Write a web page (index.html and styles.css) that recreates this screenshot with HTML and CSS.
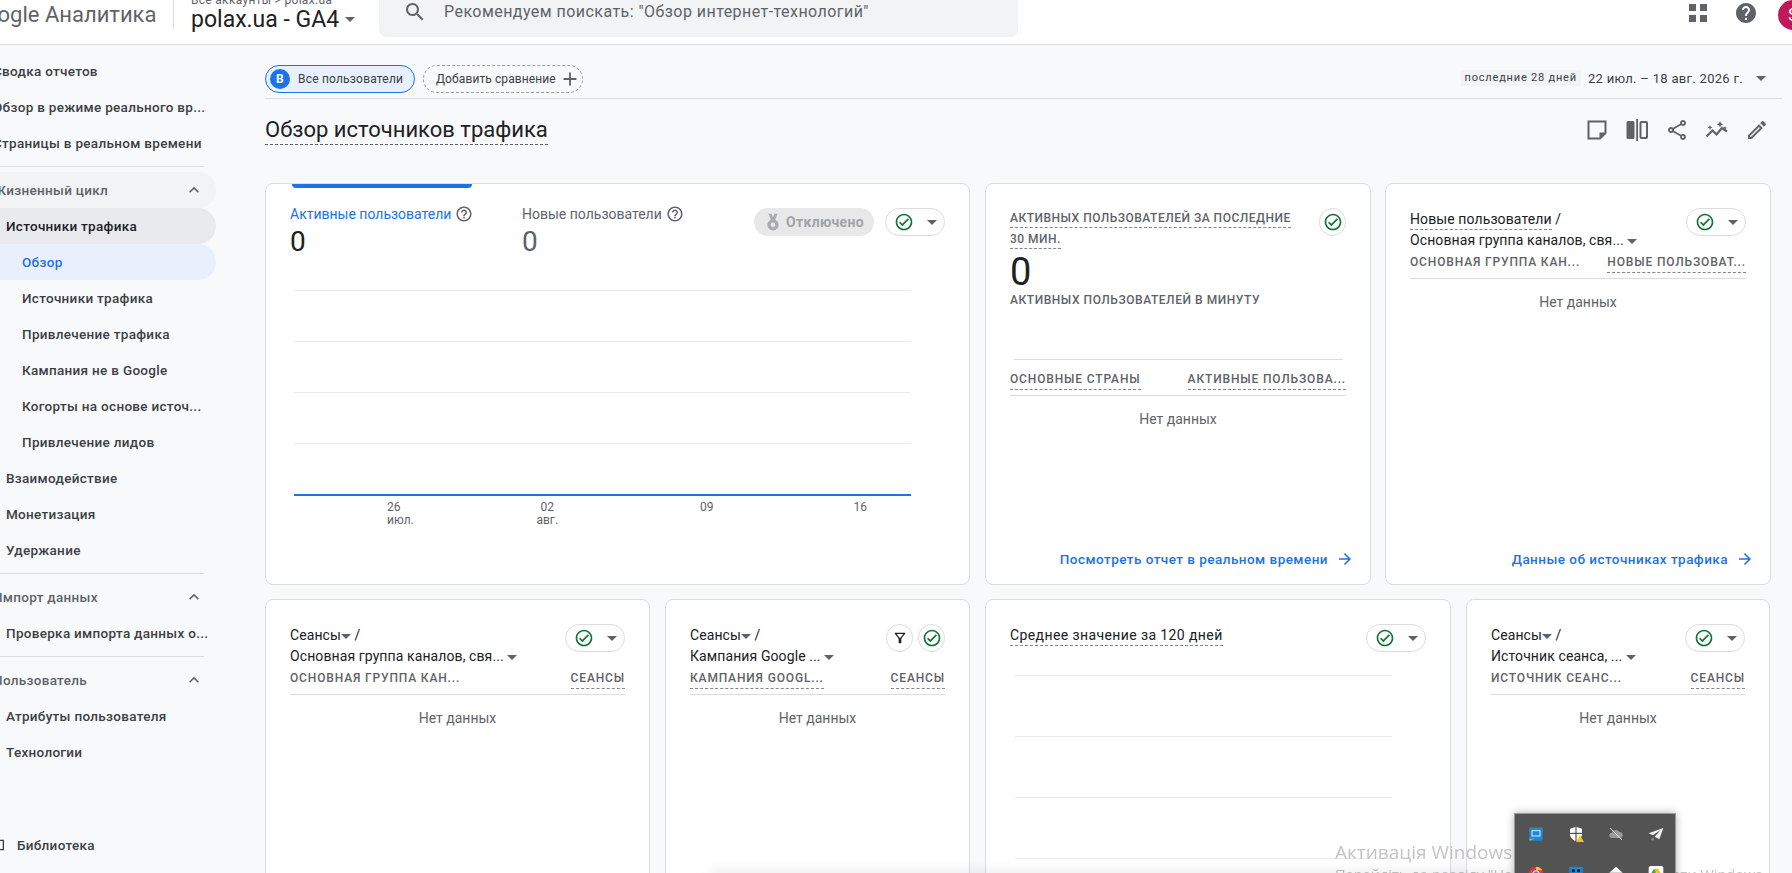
FILE: index.html
```html
<!DOCTYPE html>
<html lang="ru">
<head>
    <meta charset="UTF-8">
    <title>Обзор источников трафика</title>
    <link rel="stylesheet" href="styles.css">
</head>
<body>
    <!-- icon sprite -->
    <svg class="sprite" xmlns="http://www.w3.org/2000/svg">
        <symbol id="i-check" viewBox="0 0 24 24"><path d="M12 2C6.48 2 2 6.48 2 12s4.48 10 10 10 10-4.48 10-10S17.52 2 12 2zm0 18c-4.41 0-8-3.59-8-8s3.59-8 8-8 8 3.59 8 8-3.59 8-8 8zm4.59-12.42L10 14.17l-2.59-2.58L6 13l4 4 8-8z"/></symbol>
        <symbol id="i-help" viewBox="0 0 24 24"><path d="M11 18h2v-2h-2v2zm1-16C6.48 2 2 6.48 2 12s4.48 10 10 10 10-4.48 10-10S17.52 2 12 2zm0 18c-4.41 0-8-3.59-8-8s3.59-8 8-8 8 3.59 8 8-3.59 8-8 8zm0-14c-2.21 0-4 1.79-4 4h2c0-1.1.9-2 2-2s2 .9 2 2c0 2-3 1.75-3 5h2c0-2.25 3-2.5 3-5 0-2.21-1.79-4-4-4z"/></symbol>
        <symbol id="i-up" viewBox="0 0 24 24"><path d="M7.41 15.41L12 10.83l4.59 4.58L18 14l-6-6-6 6z"/></symbol>
        <symbol id="i-arrow" viewBox="0 0 24 24"><path d="M12 4l-1.41 1.41L16.17 11H4v2h12.17l-5.58 5.59L12 20l8-8z"/></symbol>
    </svg>

    <header class="topbar">
        <div class="logo">Google Аналитика</div>
        <div class="account">
            <div class="crumbs">Все аккаунты &gt; polax.ua</div>
            <div class="property">polax.ua - GA4 <span class="caret caret-big"></span></div>
        </div>
        <div class="search">
            <svg class="search-icon" viewBox="0 0 24 24"><path d="M15.5 14h-.79l-.28-.27C15.41 12.59 16 11.11 16 9.5 16 5.91 13.09 3 9.5 3S3 5.91 3 9.5 5.91 16 9.5 16c1.61 0 3.09-.59 4.23-1.57l.27.28v.79l5 4.99L20.49 19l-4.99-5zm-6 0C7.01 14 5 11.99 5 9.5S7.01 5 9.5 5 14 7.01 14 9.5 11.99 14 9.5 14z"/></svg>
            <span>Рекомендуем поискать: "Обзор интернет-технологий"</span>
        </div>
        <div class="top-actions">
            <div class="apps"><i></i><i></i><i></i><i></i></div>
            <svg class="top-help" viewBox="0 0 24 24"><path d="M12 2C6.48 2 2 6.48 2 12s4.48 10 10 10 10-4.48 10-10S17.52 2 12 2zm1 17h-2v-2h2v2zm2.07-7.75l-.9.92C13.45 12.9 13 13.5 13 15h-2v-.5c0-1.1.45-2.1 1.17-2.83l1.24-1.26c.37-.36.59-.86.59-1.41 0-1.1-.9-2-2-2s-2 .9-2 2H8c0-2.21 1.79-4 4-4s4 1.79 4 4c0 .88-.36 1.68-.93 2.25z"/></svg>
            <div class="avatar">S</div>
        </div>
    </header>

    <div class="layout">
        <nav class="sidebar">
            <div class="nav-row lvl0 strong">Сводка отчетов</div>
            <div class="nav-row lvl0 strong">Обзор в режиме реального вр...</div>
            <div class="nav-row lvl0 strong">Страницы в реальном времени</div>
            <div class="nav-divider"></div>
            <div class="nav-row lvl0 section open">Жизненный цикл <svg class="chev"><use href="#i-up"/></svg></div>
            <div class="nav-row lvl1 active-parent">Источники трафика</div>
            <div class="nav-row lvl2 active">Обзор</div>
            <div class="nav-row lvl2">Источники трафика</div>
            <div class="nav-row lvl2">Привлечение трафика</div>
            <div class="nav-row lvl2">Кампания не в Google</div>
            <div class="nav-row lvl2">Когорты на основе источ...</div>
            <div class="nav-row lvl2">Привлечение лидов</div>
            <div class="nav-row lvl1">Взаимодействие</div>
            <div class="nav-row lvl1">Монетизация</div>
            <div class="nav-row lvl1">Удержание</div>
            <div class="nav-divider"></div>
            <div class="nav-row lvl0 section">Импорт данных <svg class="chev"><use href="#i-up"/></svg></div>
            <div class="nav-row lvl1">Проверка импорта данных о...</div>
            <div class="nav-divider"></div>
            <div class="nav-row lvl0 section">Пользователь <svg class="chev"><use href="#i-up"/></svg></div>
            <div class="nav-row lvl1">Атрибуты пользователя</div>
            <div class="nav-row lvl1">Технологии</div>
            <div class="nav-row library">
                <svg class="library-icon" viewBox="0 0 24 24"><path d="M4 5h16v14H4z" fill="none" stroke="#3c4043" stroke-width="2"/></svg>
                Библиотека
            </div>
        </nav>

        <main class="content">
            <div class="filter-bar">
                <div class="chip-user"><span class="chip-badge">В</span>Все пользователи</div>
                <div class="chip-add">Добавить сравнение
                    <svg class="chip-plus" viewBox="0 0 24 24"><path d="M19 13h-6v6h-2v-6H5v-2h6V5h2v6h6v2z"/></svg>
                </div>
                <div class="date">
                    <span class="date-pill">последние 28 дней</span>
                    <span class="date-text">22 июл. – 18 авг. 2026 г.</span>
                    <span class="caret"></span>
                </div>
            </div>

            <div class="title-row">
                <h1 class="page-title">Обзор источников трафика</h1>
                <div class="title-tools">
                    <svg viewBox="0 0 24 24"><path d="M3.5 3.5h17v11.5l-5.500 5.500h-11.500z" fill="none" stroke="#5f6368" stroke-width="2"/><path d="M21 14.500h-6.500v6.500z" fill="#5f6368"/></svg>
                    <svg viewBox="0 0 24 24"><rect x="1.500" y="3" width="8" height="18" rx="1.500" fill="#5f6368"/><rect x="11.200" y="1" width="1.800" height="22" fill="#5f6368"/><rect x="15.500" y="4" width="6.500" height="16" rx="1" fill="none" stroke="#5f6368" stroke-width="2"/></svg>
                    <svg viewBox="0 0 24 24"><path d="M18 16.080c-.76 0-1.440.3-1.960.77L8.910 12.700c.05-.23.09-.46.09-.7s-.04-.47-.09-.7l7.050-4.110c.54.5 1.250.81 2.040.81 1.660 0 3-1.340 3-3s-1.340-3-3-3-3 1.340-3 3c0 .24.04.47.09.7L8.040 9.810C7.500 9.310 6.790 9 6 9c-1.660 0-3 1.340-3 3s1.340 3 3 3c.79 0 1.500-.31 2.040-.81l7.120 4.160c-.05.21-.08.43-.08.65 0 1.610 1.310 2.920 2.920 2.920 1.610 0 2.920-1.310 2.920-2.920 0-1.610-1.310-2.920-2.920-2.920zM18 4c.55 0 1 .45 1 1s-.45 1-1 1-1-.45-1-1 .45-1 1-1zM6 13c-.55 0-1-.45-1-1s.45-1 1-1 1 .45 1 1-.45 1-1 1zm12 7.020c-.55 0-1-.45-1-1s.45-1 1-1 1 .45 1 1-.45 1-1 1z" fill="#5f6368"/></svg>
                    <svg viewBox="0 0 24 24"><path d="M1.500 18.500l6-6 4 4 5.500-6.500 5 3.500" fill="none" stroke="#5f6368" stroke-width="2.200"/><path d="M5 7l.8 1.700L7.500 9.500l-1.700.8L5 12l-.8-1.700-1.700-.8 1.700-.8zM15 3l1 2.200 2.200 1-2.200 1-1 2.200-1-2.200-2.200-1 2.200-1zM20 8l.6 1.300 1.400.7-1.400.6-.6 1.400-.6-1.400-1.400-.6 1.400-.7z" fill="#5f6368"/></svg>
                    <svg viewBox="0 0 24 24"><path d="M14.060 9.020l.92.92L5.920 19H5v-.92l9.060-9.060M17.660 3c-.25 0-.51.1-.7.29l-1.830 1.830 3.750 3.750 1.830-1.830c.39-.39.39-1.020 0-1.410l-2.340-2.340c-.2-.2-.45-.29-.71-.29zm-3.600 3.190L3 17.250V21h3.750L17.810 9.940l-3.750-3.750z" fill="#5f6368"/></svg>
                </div>
            </div>

            <section class="cards cards-top">
                <article class="card chart-card">
                    <div class="tab-marker"></div>
                    <div class="metric-head">
                        <div class="metric metric-active">
                            <div class="metric-name">Активные пользователи <svg class="help"><use href="#i-help"/></svg></div>
                            <div class="metric-value">0</div>
                        </div>
                        <div class="metric metric-new">
                            <div class="metric-name">Новые пользователи <svg class="help"><use href="#i-help"/></svg></div>
                            <div class="metric-value">0</div>
                        </div>
                        <div class="disabled-pill">
                            <svg viewBox="0 0 24 24"><path d="M6 1h4l2 5 2-5h4l-3 8a7.500 7.500 0 1 1-6 0z" fill="#a8abaf"/><circle cx="12" cy="15.500" r="3" fill="#e8e8e8"/></svg>
                            Отключено
                        </div>
                        <div class="check-chip wide"><svg class="check"><use href="#i-check"/></svg><span class="caret"></span></div>
                    </div>
                    <div class="plot">
                        <div class="grid-line"></div>
                        <div class="grid-line"></div>
                        <div class="grid-line"></div>
                        <div class="grid-line"></div>
                        <div class="base-line"></div>
                    </div>
                    <div class="axis">
                        <div class="tick first"><span>26</span><span>июл.</span></div>
                        <div class="tick"><span>02</span><span>авг.</span></div>
                        <div class="tick"><span>09</span></div>
                        <div class="tick last"><span>16</span></div>
                    </div>
                </article>

                <article class="card realtime-card">
                    <div class="card-top">
                        <div class="caps-title"><span class="dashed">Активных пользователей за последние</span> <span class="dashed">30 мин.</span></div>
                        <div class="check-chip"><svg class="check"><use href="#i-check"/></svg></div>
                    </div>
                    <div class="big-value">0</div>
                    <div class="caps-label">Активных пользователей в минуту</div>
                    <div class="spark"></div>
                    <div class="table-head">
                        <span class="dashed">Основные страны</span>
                        <span class="dashed">Активные пользова...</span>
                    </div>
                    <div class="no-data">Нет данных</div>
                    <a class="card-link">Посмотреть отчет в реальном времени <svg><use href="#i-arrow"/></svg></a>
                </article>

                <article class="card">
                    <div class="card-top">
                        <div class="card-title">
                            <div><span class="dashed">Новые пользователи</span> /</div>
                            <div>Основная группа каналов, свя... <span class="caret"></span></div>
                        </div>
                        <div class="check-chip wide"><svg class="check"><use href="#i-check"/></svg><span class="caret"></span></div>
                    </div>
                    <div class="table-head">
                        <span>Основная группа кан...</span>
                        <span class="dashed">Новые пользоват...</span>
                    </div>
                    <div class="no-data">Нет данных</div>
                    <a class="card-link">Данные об источниках трафика <svg><use href="#i-arrow"/></svg></a>
                </article>
            </section>

            <section class="cards cards-bottom">
                <article class="card">
                    <div class="card-top">
                        <div class="card-title">
                            <div>Сеансы<span class="caret"></span> /</div>
                            <div>Основная группа каналов, свя... <span class="caret"></span></div>
                        </div>
                        <div class="check-chip wide"><svg class="check"><use href="#i-check"/></svg><span class="caret"></span></div>
                    </div>
                    <div class="table-head">
                        <span>Основная группа кан...</span>
                        <span class="dashed">Сеансы</span>
                    </div>
                    <div class="no-data">Нет данных</div>
                </article>

                <article class="card">
                    <div class="card-top">
                        <div class="card-title">
                            <div>Сеансы<span class="caret"></span> /</div>
                            <div>Кампания Google ... <span class="caret"></span></div>
                        </div>
                        <div class="chip-pair">
                            <div class="check-chip"><svg class="funnel" viewBox="0 0 24 24"><path d="M4.250 5.610C6.270 8.200 10 13 10 13v6c0 .55.45 1 1 1h2c.55 0 1-.45 1-1v-6s3.720-4.800 5.740-7.390c.51-.66.04-1.610-.79-1.610H5.040c-.83 0-1.300.95-.79 1.610zM7 6h10l-5 6.500z" fill-rule="evenodd"/></svg></div>
                            <div class="check-chip"><svg class="check"><use href="#i-check"/></svg></div>
                        </div>
                    </div>
                    <div class="table-head">
                        <span class="dashed">Кампания Googl...</span>
                        <span class="dashed">Сеансы</span>
                    </div>
                    <div class="no-data">Нет данных</div>
                </article>

                <article class="card">
                    <div class="card-top single">
                        <div class="card-title avg-title"><span class="dashed">Среднее значение за 120 дней</span></div>
                        <div class="check-chip wide"><svg class="check"><use href="#i-check"/></svg><span class="caret"></span></div>
                    </div>
                    <div class="avg-plot">
                        <div class="grid-line"></div>
                        <div class="grid-line"></div>
                        <div class="grid-line"></div>
                        <div class="grid-line"></div>
                    </div>
                </article>

                <article class="card">
                    <div class="card-top">
                        <div class="card-title">
                            <div>Сеансы<span class="caret"></span> /</div>
                            <div>Источник сеанса, ... <span class="caret"></span></div>
                        </div>
                        <div class="check-chip wide"><svg class="check"><use href="#i-check"/></svg><span class="caret"></span></div>
                    </div>
                    <div class="table-head">
                        <span>Источник сеанс...</span>
                        <span class="dashed">Сеансы</span>
                    </div>
                    <div class="no-data">Нет данных</div>
                </article>
            </section>
        </main>
    </div>

    <!-- windows watermark, taskbar shadow and tray popup over the page -->
    <div class="activation">
        <div class="activation-title">Активація Windows</div>
        <div class="activation-text">Перейдіть до розділу "Настройки", щоб активувати Windows.</div>
    </div>
    <div class="bottom-shadow"></div>
    <div class="tray">
        <svg viewBox="0 0 24 24"><rect x="2" y="2" width="20" height="20" rx="2" fill="#1e88d8"/><rect x="6" y="7" width="12" height="8" fill="none" stroke="#d8f0ff" stroke-width="1.500"/><path d="M2 19h8l-8 3z" fill="#e8a030"/></svg>
        <svg viewBox="0 0 24 24"><path d="M12 1l9 3v8c0 5-4 9-9 11-5-2-9-6-9-11V4z" fill="#fff"/><path d="M12 1v22M3 11h18" stroke="#333" stroke-width="1.500"/><path d="M18 14l6 10H12z" fill="#f5c518"/></svg>
        <svg viewBox="0 0 24 24"><path d="M6 18a4 4 0 0 1 0-8 6 6 0 0 1 11-1 4.500 4.500 0 0 1 1 9z" fill="#9a9a9a"/><path d="M3 3l18 18" stroke="#e8e8e8" stroke-width="1.500"/></svg>
        <svg viewBox="0 0 24 24"><path d="M23 3L1 11l6 3 12-8-9 10 7 4z" fill="#f2f2f2"/><circle cx="7" cy="20" r="2" fill="#8a8a8a"/></svg>
        <svg viewBox="0 0 24 24"><circle cx="12" cy="12" r="11" fill="#e53935"/><path d="M12 1a11 11 0 0 1 9.500 5.500H12z" fill="#fbc02d"/><circle cx="12" cy="12" r="5" fill="#4285f4" stroke="#fff" stroke-width="1.500"/></svg>
        <svg viewBox="0 0 24 24"><rect x="2" y="1" width="20" height="22" rx="1" fill="#1e88d8"/><circle cx="8" cy="7" r="2.500" fill="#123"/><circle cx="16" cy="7" r="2.500" fill="#123"/></svg>
        <svg viewBox="0 0 24 24"><path d="M12 1l10 9H2z" fill="#fff"/></svg>
        <svg viewBox="0 0 24 24"><rect x="1" y="0" width="22" height="22" rx="3" fill="#fff"/><path d="M9 4h6l6 10H15z" fill="#fbbc04"/><path d="M9 4L3 14l3 5 6-10z" fill="#34a853"/></svg>
    </div>
</body>
</html>
```

FILE: styles.css
```css
* {
    box-sizing: border-box;
}

html, body {
    margin: 0;
    padding: 0;
    height: 100%;
    overflow: hidden;
}

body {
    font-family: Roboto, "Liberation Sans", sans-serif;
    font-size: 14px;
    color: #202124;
    background: #f8f9fa;
}

.sprite {
    width: 0;
    height: 0;
    position: absolute;
}

.caret {
    display: inline-block;
    width: 0;
    height: 0;
    border-left: 5px solid transparent;
    border-right: 5px solid transparent;
    border-top: 5px solid #5f6368;
    vertical-align: middle;
}

.dashed {
    border-bottom: 1px dashed #80868b;
    padding-bottom: 2px;
}

/* top bar */
.topbar {
    height: 45px;
    display: flex;
    background: #fff;
    border-bottom: 1px solid #dadce0;
    overflow: hidden;
}

.logo {
    margin-left: -30px;
    flex: 0 0 auto;
    width: 204px;
    height: 29px;
    font-size: 22px;
    line-height: 29px;
    color: #5f6368;
    border-right: 1px solid #dadce0;
    white-space: nowrap;
}

.account {
    width: 205px;
    padding-left: 17px;
    margin-top: -7px;
}

.crumbs {
    font-size: 12px;
    letter-spacing: .3px;
    line-height: 14px;
    color: #5f6368;
    white-space: nowrap;
}

.property {
    font-size: 23px;
    line-height: 26px;
    white-space: nowrap;
}

.caret-big {
    margin-top: -2px;
}

.search {
    width: 639px;
    height: 37px;
    padding-left: 24px;
    display: flex;
    align-items: flex-start;
    background: #f1f3f4;
    border-radius: 0 0 8px 8px;
    color: #5f6368;
    font-size: 16px;
    letter-spacing: .45px;
    line-height: 24px;
}

.search-icon {
    width: 24px;
    height: 24px;
    margin-right: 17px;
    fill: #5f6368;
}

.top-actions {
    margin-left: auto;
    display: flex;
    gap: 29px;
}

.apps {
    width: 18px;
    height: 18px;
    margin-top: 4px;
    display: grid;
    grid-template-columns: 7px 7px;
    grid-template-rows: 7px 7px;
    gap: 4px;
}

.apps i {
    background: #5f6368;
}

.top-help {
    width: 24px;
    height: 24px;
    margin-top: 1px;
    margin-left: -2px;
    fill: #5f6368;
}

.avatar {
    width: 30px;
    height: 30px;
    margin-left: -9px;
    margin-right: -16px;
    border-radius: 50%;
    background: #c2185b;
    color: #fff;
    font-size: 18px;
    line-height: 30px;
    padding-left: 10px;
}

/* layout */
.layout {
    display: flex;
    height: calc(100vh - 45px);
}

.sidebar {
    width: 240px;
    margin-left: -24px;
    margin-right: 49px;
    flex: 0 0 auto;
    padding-top: 8px;
    display: flex;
    flex-direction: column;
    font-size: 13.5px;
    letter-spacing: .3px;
    color: #3c4043;
    font-weight: 500;
}

.nav-row {
    height: 36px;
    flex: 0 0 36px;
    line-height: 36px;
    white-space: nowrap;
    border-radius: 0 18px 18px 0;
    position: relative;
}

.lvl0 {
    padding-left: 17px;
}

.lvl1 {
    padding-left: 30px;
}

.lvl2 {
    padding-left: 46px;
}

.section {
    color: #5f6368;
}

.open {
    background: #f1f3f4;
}

.active-parent {
    background: #e8eaed;
    color: #202124;
}

.active {
    background: #e8f0fe;
    color: #1a73e8;
}

.chev {
    width: 20px;
    height: 20px;
    position: absolute;
    left: 208px;
    top: 8px;
    fill: #5f6368;
}

.nav-divider {
    height: 1px;
    flex: 0 0 1px;
    margin: 5px 12px 5px 0;
    background: #dadce0;
}

.library {
    margin-top: auto;
    margin-bottom: 10px;
    padding-left: 41px;
}

.library-icon {
    width: 16px;
    height: 16px;
    position: absolute;
    left: 14px;
    top: 10px;
}

/* content */
.content {
    flex: 1;
    min-width: 0;
}

.filter-bar {
    height: 54px;
    margin-right: 10px;
    padding-top: 20px;
    display: flex;
    align-items: flex-start;
    gap: 8px;
    border-bottom: 1px solid #dadce0;
}

.chip-user {
    height: 28px;
    width: 150px;
    display: flex;
    align-items: center;
    gap: 8px;
    padding-left: 4px;
    font-size: 12px;
    letter-spacing: .2px;
    color: #3c4043;
    background: #e8f0fe;
    border: 1px solid #1a73e8;
    border-radius: 14px;
}

.chip-badge {
    width: 20px;
    height: 20px;
    border-radius: 50%;
    background: #1a73e8;
    color: #fff;
    font-weight: 700;
    text-align: center;
    line-height: 20px;
}

.chip-add {
    height: 28px;
    width: 160px;
    padding-left: 12px;
    display: flex;
    align-items: center;
    gap: 3px;
    font-size: 12px;
    letter-spacing: .1px;
    color: #3c4043;
    border: 1px dashed #9aa0a6;
    border-radius: 14px;
    white-space: nowrap;
}

.chip-plus {
    width: 22px;
    height: 22px;
    flex: 0 0 auto;
    fill: #5f6368;
}

.date {
    margin-left: auto;
    margin-right: 16px;
    display: flex;
    align-items: center;
    height: 26px;
}

.date-pill {
    padding: 0 4px;
    height: 16px;
    line-height: 16px;
    font-size: 11px;
    letter-spacing: .8px;
    background: #f1f3f4;
    color: #3c4043;
    margin-right: 7px;
}

.date-text {
    font-size: 13px;
    letter-spacing: .3px;
    color: #3c4043;
    margin-right: 13px;
}

.title-row {
    height: 84px;
    margin-right: 23px;
    padding-top: 19px;
    display: flex;
    align-items: flex-start;
    justify-content: space-between;
}

.page-title {
    margin: 0;
    font-size: 22px;
    font-weight: 400;
    line-height: 24px;
    padding-bottom: 2px;
    border-bottom: 1px dashed #5f6368;
}

.title-tools {
    display: flex;
    gap: 16px;
}

.title-tools svg {
    width: 24px;
    height: 24px;
}

/* cards */
.cards {
    display: grid;
    gap: 14px 15px;
    width: 1505px;
    margin-bottom: 14px;
}

.cards-top {
    grid-template-columns: 705px 386px 385px;
    column-gap: 15px;
    height: 402px;
}

.cards-top > :last-child {
    margin-left: -1px;
}

.cards-bottom {
    grid-template-columns: 385px 305px 466px 304px;
    height: 320px;
}

.card {
    position: relative;
    background: #fff;
    border: 1px solid #dadce0;
    border-radius: 8px;
    padding: 24px;
}

.card-top {
    display: flex;
    justify-content: space-between;
    align-items: flex-start;
}

.card-title {
    font-size: 14px;
    letter-spacing: .1px;
    line-height: 21px;
    margin-top: 1px;
    white-space: nowrap;
}

.avg-title {
    letter-spacing: .4px;
}

.check-chip {
    flex: 0 0 auto;
    width: 27px;
    height: 28px;
    display: flex;
    align-items: center;
    justify-content: center;
    gap: 13px;
    border: 1px solid #dadce0;
    border-radius: 14px;
    background: #fff;
}

.check-chip.wide {
    width: 60px;
}

.check {
    width: 20px;
    height: 20px;
    fill: #137333;
}

.funnel {
    width: 16px;
    height: 16px;
    fill: #202124;
}

.chip-pair {
    display: flex;
    gap: 5px;
}

.table-head {
    height: 28px;
    padding-top: 3px;
    display: flex;
    align-items: flex-start;
    justify-content: space-between;
    font-size: 12px;
    letter-spacing: .85px;
    line-height: 16px;
    color: #5f6368;
    font-weight: 500;
    text-transform: uppercase;
    border-bottom: 1px solid #dadce0;
    white-space: nowrap;
}

.realtime-card .table-head {
    height: 25px;
    padding-top: 0;
}

.no-data {
    margin-top: 14px;
    text-align: center;
    line-height: 18px;
    font-size: 14px;
    color: #5f6368;
}

.card-link {
    position: absolute;
    right: 16px;
    bottom: 16px;
    display: flex;
    align-items: center;
    gap: 8px;
    color: #1a73e8;
    font-size: 13.5px;
    font-weight: 500;
    letter-spacing: .46px;
}

.card-link svg {
    width: 18px;
    height: 18px;
    fill: #1a73e8;
}

/* chart card */
.tab-marker {
    position: absolute;
    left: 26px;
    top: 0;
    width: 180px;
    height: 4px;
    background: #1a73e8;
    border-radius: 0 0 4px 4px;
}

.metric-head {
    display: flex;
    align-items: flex-start;
    height: 69px;
}

.metric {
    flex: 0 0 auto;
}

.metric-active {
    width: 232px;
}

.metric-new {
    width: 232px;
}

.metric-name {
    font-size: 14px;
    line-height: 20px;
    margin-top: -4px;
    color: #5f6368;
    display: flex;
    align-items: center;
    gap: 4px;
    white-space: nowrap;
}

.metric-active .metric-name {
    color: #1a73e8;
}

.metric-value {
    font-size: 28px;
    line-height: 36px;
    color: #5f6368;
}

.metric-active .metric-value {
    color: #202124;
}

.help {
    width: 18px;
    height: 18px;
    fill: #5f6368;
}

.disabled-pill {
    height: 28px;
    width: 120px;
    display: flex;
    align-items: center;
    justify-content: center;
    gap: 4px;
    border-radius: 14px;
    background: #e8e8e8;
    color: #a0a3a7;
    font-weight: 700;
    font-size: 14px;
    letter-spacing: .3px;
}

.disabled-pill svg {
    width: 18px;
    height: 18px;
}

.chart-card .check-chip {
    margin-left: 11px;
}

.plot {
    margin: 13px 34px 0 4px;
    height: 206px;
    display: flex;
    flex-direction: column;
    justify-content: space-between;
}

.grid-line {
    height: 1px;
    background: #e8eaed;
}

.base-line {
    height: 2px;
    background: #1a73e8;
}

.axis {
    margin-left: 18px;
    display: grid;
    grid-template-columns: repeat(4, 159.5px);
    font-size: 12px;
    line-height: 12.5px;
    color: #5f6368;
}

.tick {
    display: flex;
    flex-direction: column;
    align-items: center;
    padding-top: 5px;
}

.tick.first {
    align-items: flex-start;
    padding-left: 79px;
}

.tick.last {
    align-items: flex-end;
    padding-right: 79px;
}

/* realtime card */
.caps-title {
    width: 288px;
    font-size: 12px;
    line-height: 21px;
    letter-spacing: .5px;
    font-weight: 500;
    color: #5f6368;
    text-transform: uppercase;
}

.big-value {
    font-size: 38px;
    line-height: 39px;
    margin-top: 3px;
}

.caps-label {
    font-size: 12px;
    line-height: 16px;
    letter-spacing: .55px;
    font-weight: 500;
    color: #5f6368;
    text-transform: uppercase;
}

.spark {
    height: 1px;
    margin: 51px 3px 11px 4px;
    background: #dadce0;
}

/* average card */
.avg-plot {
    margin: 23px 34px 0 5px;
    height: 184px;
    display: flex;
    flex-direction: column;
    justify-content: space-between;
}

/* windows overlay */
.activation {
    position: fixed;
    left: 1335px;
    top: 838px;
    color: #c4c4c4;
    font-family: "Open Sans", sans-serif;
    white-space: nowrap;
}

.activation-title {
    font-size: 19px;
    line-height: 28px;
}

.activation-text {
    font-size: 14.5px;
    line-height: 18px;
}

.bottom-shadow {
    position: fixed;
    left: 710px;
    right: 280px;
    bottom: -8px;
    height: 8px;
    box-shadow: 0 0 14px rgba(0, 0, 0, .12);
}

.tray {
    position: fixed;
    left: 1514px;
    top: 813px;
    width: 162px;
    height: 100px;
    padding: 12px 13px 0;
    display: grid;
    grid-template-columns: repeat(4, 16px);
    grid-auto-rows: 16px;
    column-gap: 24px;
    row-gap: 24px;
    background: #535353;
    border: 1px solid #9a9a9a;
    box-shadow: 0 0 8px rgba(0, 0, 0, .3);
}

.tray svg {
    width: 16px;
    height: 16px;
}
```
